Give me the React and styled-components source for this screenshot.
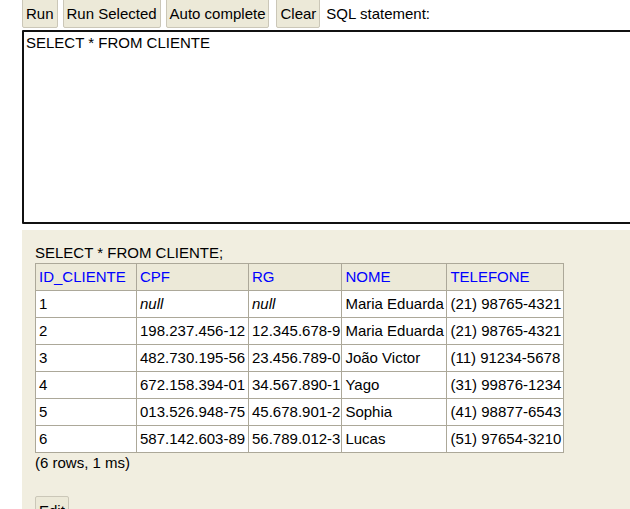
import React from "react";
import styled, { createGlobalStyle } from "styled-components";

const Global = createGlobalStyle`
  html, body { margin: 0; padding: 0; background: #fff; overflow: hidden; }
  body { font-family: "Liberation Sans", Arial, sans-serif; font-size: 15px; color: #000; }
  #root { width: 630px; height: 509px; overflow: hidden; }
`;

const Page = styled.div`
  padding-left: 22px;
  height: 509px;
  display: flex;
  flex-direction: column;
`;

const Toolbar = styled.div`
  display: flex;
  align-items: center;
  gap: 5px;
  margin-top: -2px;
  height: 30px;
  white-space: nowrap;
`;

const Button = styled.button`
  font-family: "Liberation Sans", Arial, sans-serif;
  font-size: 15px;
  color: #000;
  background: #ece9d8;
  border: 1px solid #cbc7b8;
  border-radius: 2px;
  padding: 0 3px;
  height: 30px;
  margin-left: ${(p) => p.$extra || 0}px;
  cursor: pointer;
`;

const Label = styled.span`
  font-size: 15px;
  margin-left: 1px;
`;

const Editor = styled.textarea`
  display: block;
  margin-top: 2px;
  width: 640px;
  height: 194px;
  box-sizing: border-box;
  border: 2px solid #111;
  border-radius: 1px;
  padding: 2px 2px;
  font-family: "Liberation Sans", Arial, sans-serif;
  font-size: 15px;
  line-height: 17px;
  resize: none;
  outline: none;
  flex: none;
`;

const Result = styled.div`
  margin-top: 6px;
  flex: 1;
  background: #f1eee0;
  padding: 14px 13px;
`;

const Statement = styled.div`
  line-height: 17px;
`;

const Table = styled.table`
  margin-top: 2px;
  border-collapse: collapse;
  border: 1px solid #aca899;
`;

const Th = styled.th`
  background: #ece9d8;
  color: #0000ff;
  font-weight: normal;
  text-align: left;
  border: 1px solid #aca899;
  padding: 4px 1px 4px 3px;
  line-height: 18px;
  font-size: 15px;
  width: ${(p) => p.$w}px;
  box-sizing: border-box;
  white-space: nowrap;
`;

const Td = styled.td`
  background: #fff;
  text-align: left;
  vertical-align: top;
  border: 1px solid #aca899;
  padding: 4px 1px 4px 3px;
  line-height: 18px;
  font-size: 15px;
  font-style: ${(p) => (p.$null ? "italic" : "normal")};
  white-space: nowrap;
`;

const Summary = styled.div`
  margin-top: 1px;
  line-height: 18px;
`;

const EditButton = styled(Button)`
  margin-top: 24px;
  height: 28px;
`;

const cols = [
  ["ID_CLIENTE", 101],
  ["CPF", 112],
  ["RG", 93],
  ["NOME", 105],
  ["TELEFONE", 117],
];

const rows = [
  ["1", null, null, "Maria Eduarda", "(21) 98765-4321"],
  ["2", "198.237.456-12", "12.345.678-9", "Maria Eduarda", "(21) 98765-4321"],
  ["3", "482.730.195-56", "23.456.789-0", "João Victor", "(11) 91234-5678"],
  ["4", "672.158.394-01", "34.567.890-1", "Yago", "(31) 99876-1234"],
  ["5", "013.526.948-75", "45.678.901-2", "Sophia", "(41) 98877-6543"],
  ["6", "587.142.603-89", "56.789.012-3", "Lucas", "(51) 97654-3210"],
];

export default function App() {
  return (
    <>
      <Global />
      <Page>
        <Toolbar>
          <Button>Run</Button>
          <Button>Run Selected</Button>
          <Button>Auto complete</Button>
          <Button $extra={2}>Clear</Button>
          <Label>SQL statement:</Label>
        </Toolbar>
        <Editor defaultValue="SELECT * FROM CLIENTE" spellCheck={false} />
        <Result>
          <Statement>SELECT * FROM CLIENTE;</Statement>
          <Table>
            <thead>
              <tr>
                {cols.map(([c, w]) => (
                  <Th key={c} $w={w}>{c}</Th>
                ))}
              </tr>
            </thead>
            <tbody>
              {rows.map((r, i) => (
                <tr key={i}>
                  {r.map((v, j) => (
                    <Td key={j} $null={v === null}>{v === null ? "null" : v}</Td>
                  ))}
                </tr>
              ))}
            </tbody>
          </Table>
          <Summary>(6 rows, 1 ms)</Summary>
          <div>
            <EditButton>Edit</EditButton>
          </div>
        </Result>
      </Page>
    </>
  );
}
